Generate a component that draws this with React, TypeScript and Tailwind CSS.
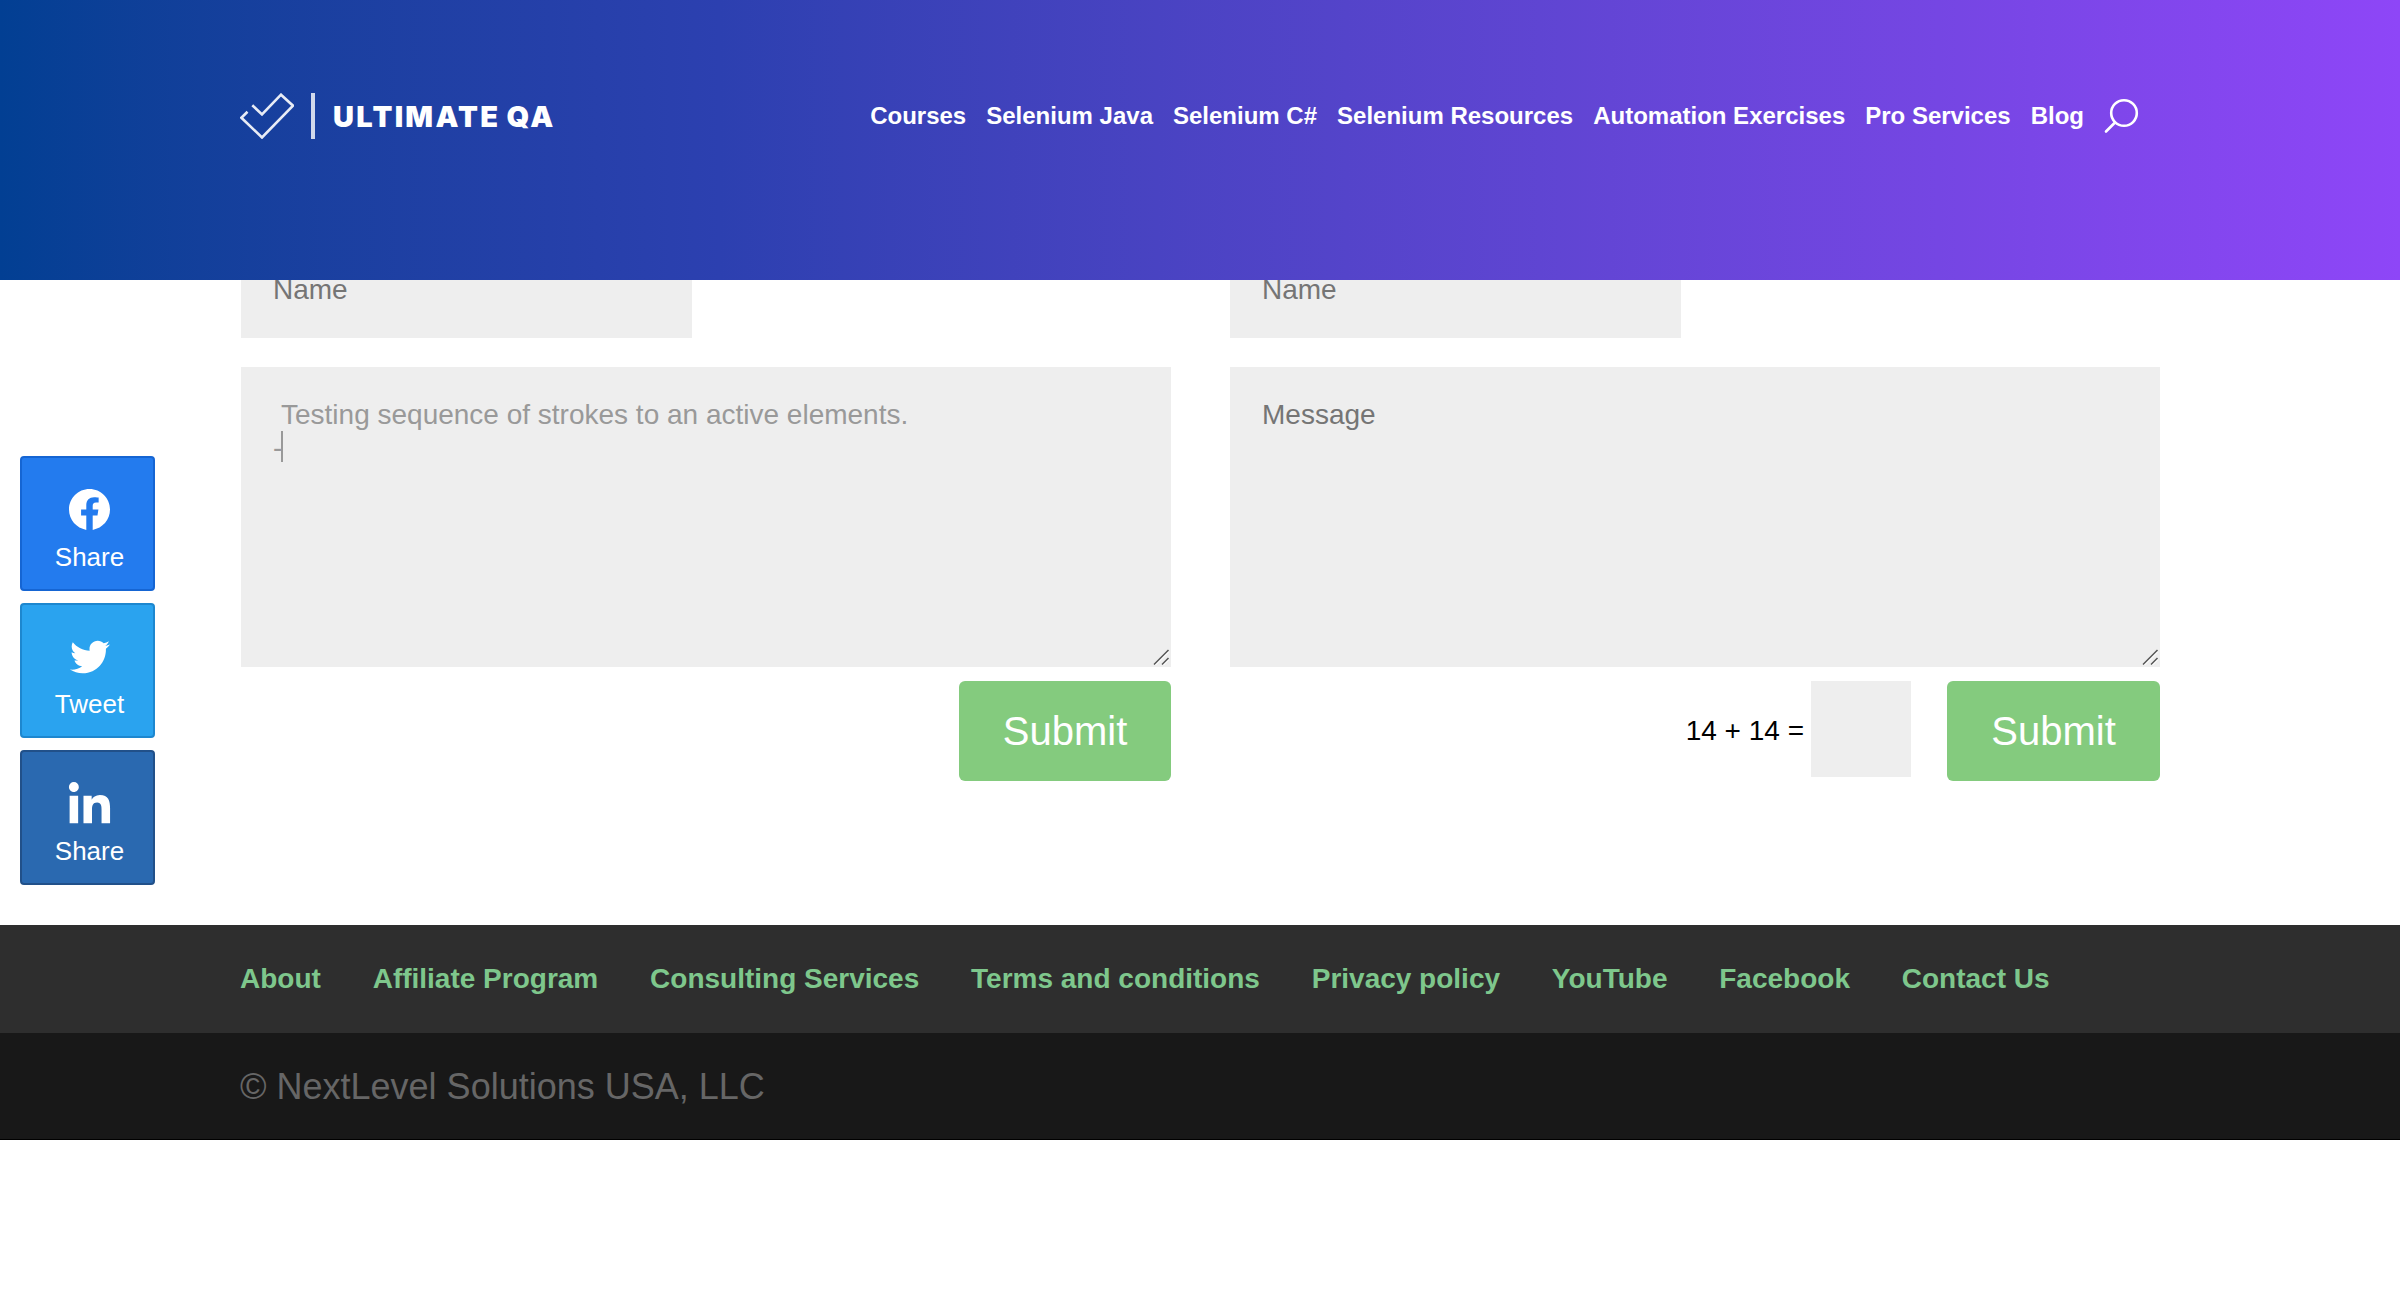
import React from "react";
import { FaTwitter, FaLinkedinIn } from "react-icons/fa";

const navItems = ["Courses", "Selenium Java", "Selenium C#", "Selenium Resources", "Automation Exercises", "Pro Services", "Blog"];
const footerItems = ["About", "Affiliate Program", "Consulting Services", "Terms and conditions", "Privacy policy", "YouTube", "Facebook", "Contact Us"];

function Logo() {
  return (
    <div className="flex h-[46px] items-center text-white">
      <svg width="54" height="46" viewBox="0 0 54 46" fill="none" stroke="currentColor" strokeWidth="2.6" strokeOpacity="0.9">
        <path d="M12.3 12.2 L22 21.5 L41 1.7 L53 12.7 L22 44.5 L1.4 24.7 L7.5 18.7" />
      </svg>
      <div className="ml-[17px] h-[46px] w-[4px] bg-white/80" />
      <div className="ml-[18px] pt-[2px] font-['Inter'] text-[29px] leading-[46px] font-black tracking-[2.3px] whitespace-nowrap [word-spacing:-2px]">ULTIMATE QA</div>
    </div>
  );
}

function SearchIcon() {
  return (
    <svg className="ml-5" width="36" height="36" viewBox="0 0 36 36" fill="none" stroke="white" strokeWidth="2.6" strokeLinecap="round">
      <circle cx="20" cy="15" r="12.8" />
      <path d="M11 24.5 L2 33.5" />
    </svg>
  );
}

function Header() {
  return (
    <header className="relative z-10 h-[280px] bg-linear-to-r from-[#023f93] from-0% via-[#2c40b0] via-30% to-[#8e46f7] to-100%">
      <div className="mx-auto flex h-[232px] w-[1920px] items-center justify-between">
        <Logo />
        <nav className="flex items-center pr-[20px] text-2xl font-bold text-white">
          <div className="flex gap-5">
            {navItems.map((n) => (
              <a key={n} className="whitespace-nowrap">{n}</a>
            ))}
          </div>
          <SearchIcon />
        </nav>
      </div>
    </header>
  );
}

function Resizer() {
  return (
    <svg className="absolute right-[1px] bottom-[1px]" width="17" height="17" viewBox="0 0 17 17" fill="none">
      <path d="M1 15.5 L15.5 1 M9 15.5 L15.5 9" stroke="#555" strokeWidth="1.5" />
      <path d="M2.7 16 L15.7 3 M10.7 16 L15.7 11" stroke="#fff" strokeWidth="1" />
    </svg>
  );
}

function Submit({ className }: { className: string }) {
  return <button className={"h-[100px] rounded-md bg-[#84cb7e] text-[40px] text-white " + className}>Submit</button>;
}

function ContactForm({ message, captcha }: { message: React.ReactNode; captcha?: string }) {
  return (
    <form className="w-[930px] text-[28px] leading-[33px] text-[#757575]">
      <div className="h-[106px] w-[450.5px] bg-[#eee] px-8 pt-[41px]">Name</div>
      <div className="relative mt-[29px] h-[300px] bg-[#eee] px-8 pt-[31px]">
        {message}
        <Resizer />
      </div>
      <div className="mt-[14px] flex justify-end">
        {captcha && (
          <div className="mr-[36px] flex text-black">
            <span className="mr-[7px] pt-[33px]">{captcha}</span>
            <div className="h-24 w-[100px] bg-[#eee]" />
          </div>
        )}
        <Submit className={captcha ? "w-[213px]" : "w-[212px]"} />
      </div>
    </form>
  );
}

function FacebookIcon() {
  return (
    <svg width="41" height="41" viewBox="0 0 24 24" fill="currentColor">
      <path d="M24 12.073c0-6.627-5.373-12-12-12s-12 5.373-12 12c0 5.99 4.388 10.954 10.125 11.854v-8.385H7.078v-3.47h3.047V9.43c0-3.007 1.792-4.669 4.533-4.669 1.312 0 2.686.235 2.686.235v2.953H15.83c-1.491 0-1.956.925-1.956 1.874v2.25h3.328l-.532 3.47h-2.796v8.385C19.612 23.027 24 18.062 24 12.073z" />
    </svg>
  );
}

function ShareButton({ className, label, icon }: { className: string; label: string; icon: React.ReactNode }) {
  return (
    <a className={"flex h-[135px] w-[135px] flex-col items-center rounded border-2 pt-[31px] pl-[4px] text-[26px] leading-[30px] text-white " + className}>
      <span className="flex h-[41px] items-center">{icon}</span>
      <span className="mt-[12px]">{label}</span>
    </a>
  );
}

export default function App() {
  return (
    <div className="relative h-[1300px] w-[2400px] overflow-hidden bg-white font-['Liberation_Sans',Arial,sans-serif]">
      <Header />
      <main className="mx-auto -mt-12 flex h-[693px] w-[1920px] justify-between pl-px">
        <ContactForm
          message={
            <div className="text-[#999]">
              <div className="pl-[8px]">Testing sequence of strokes to an active elements.</div>
              <div className="flex">
                -<span className="-ml-px h-[31px] w-[2px] bg-[#999]" />
              </div>
            </div>
          }
        />
        <ContactForm message="Message" captcha="14 + 14 =" />
      </main>
      <footer>
        <div className="h-[108px] bg-[#2e2e2e]">
          <div className="mx-auto flex w-[1920px] gap-[51.8px] pt-[37px] text-[28px] leading-[33px] font-bold text-[#7ec78c]">
            {footerItems.map((f) => (
              <a key={f} className="whitespace-nowrap">{f}</a>
            ))}
          </div>
        </div>
        <div className="h-[107px] border-b border-black bg-[#181818]">
          <div className="mx-auto w-[1920px] pt-[33px] text-4xl leading-[41px] text-[#666]">© NextLevel Solutions USA, LLC</div>
        </div>
      </footer>
      <aside className="absolute top-[456px] left-5 flex flex-col gap-3">
        <ShareButton className="border-[#1565d3] bg-[#237bee]" label="Share" icon={<FacebookIcon />} />
        <ShareButton className="border-[#1d87cf] bg-[#2aa3ef]" label="Tweet" icon={<FaTwitter size={40} />} />
        <ShareButton className="border-[#215089] bg-[#2a69b0]" label="Share" icon={<FaLinkedinIn size={47} className="mt-[3px]" />} />
      </aside>
    </div>
  );
}
